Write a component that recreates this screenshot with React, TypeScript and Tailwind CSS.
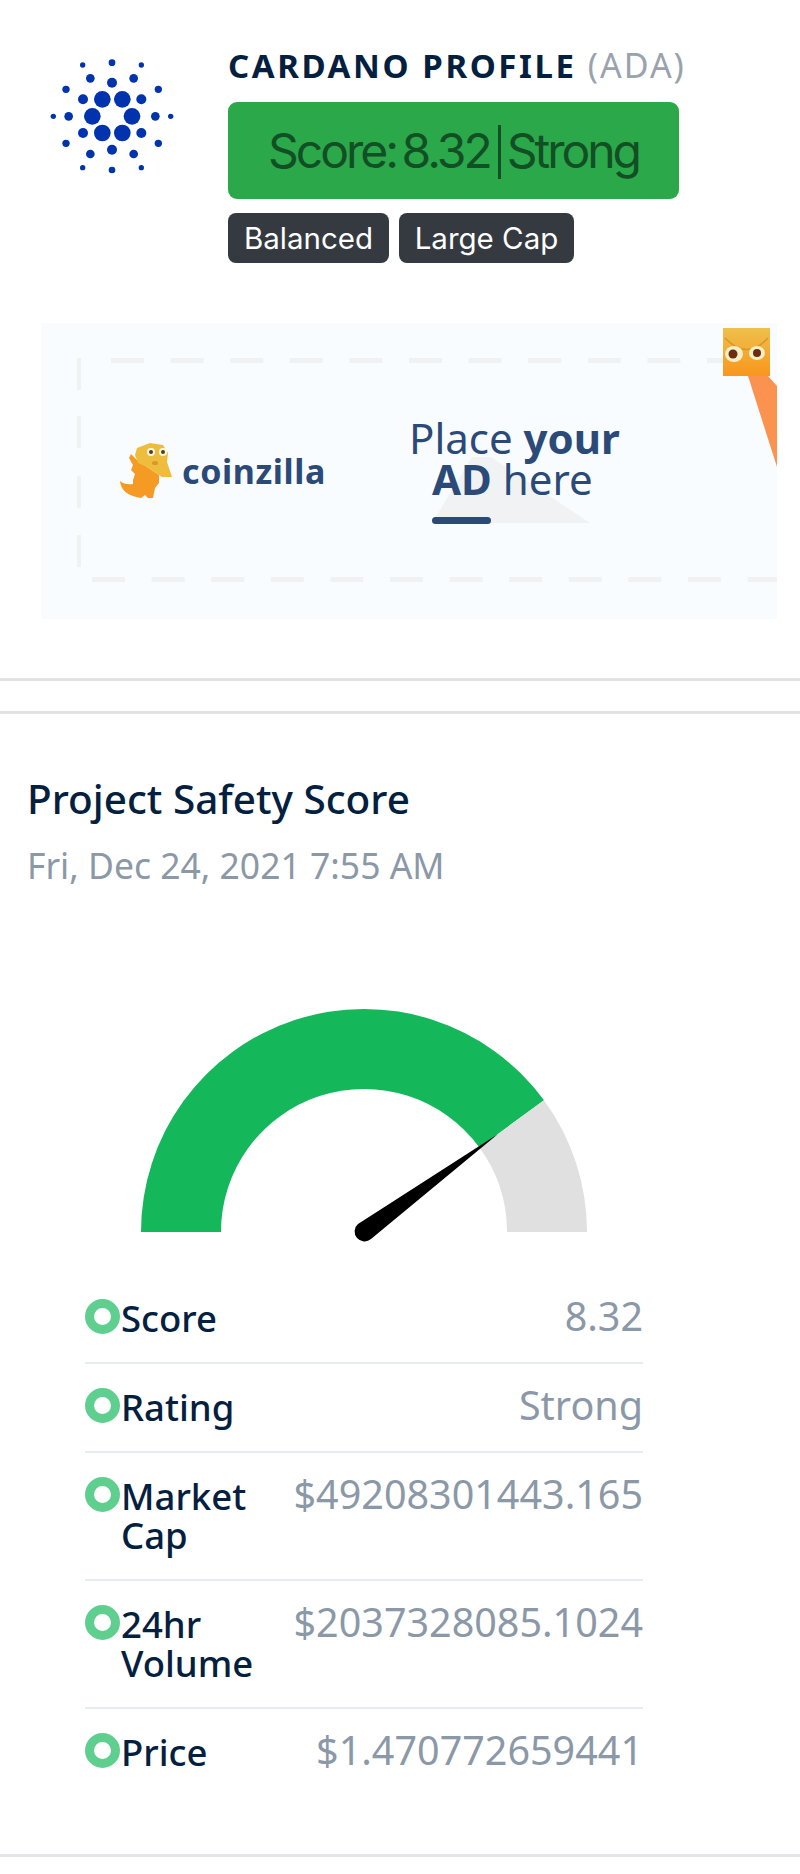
const dots: [number, number, number][] = [
  [217,178,25],[277,178,25],[187,229,25],[306,229,25],[217,279,25],[277,279,25],
  [159,178,15],[334,178,15],[116,229,13],[376,229,13],[159,279,15],[334,279,15],
  [246,128,15],[246,329,15],[181,115,13],[311,115,13],[181,342,13],[311,342,13],
  [108,148,11],[385,148,11],[108,310,11],[385,310,11],[70,229,8],[422,229,8],
  [158,75,8],[334,75,8],[158,383,8],[334,383,8],[246,68,10],[246,390,10],
];

function CardanoLogo() {
  return (
    <svg viewBox="0 0 480 480" className="w-[160px] h-[160px] shrink-0">
      {dots.map(([x, y, r], i) => (
        <circle key={i} cx={x} cy={y} r={r} fill="#0033ad" />
      ))}
    </svg>
  );
}

function Ad() {
  const topDashes = Array.from({ length: 11 }, (_, i) => 70 + i * 59.6);
  const bottomDashes = Array.from({ length: 12 }, (_, i) => 51 + i * 59.6);
  const ubuntu = "'Noto Sans', sans-serif";
  return (
    <svg viewBox="0 0 736 296" className="block w-[736px] h-[296px]">
      <rect width="736" height="296" fill="#f9fcff" />
      {topDashes.map((x) => <rect key={x} x={x} y="35" width="33" height="5" fill="#eff1f3" />)}
      {bottomDashes.map((x) => <rect key={x} x={x} y="254" width="33" height="5" fill="#eff1f3" />)}
      {[35, 93, 153, 212].map((y) => <rect key={y} x="36" y={y} width="4" height="32" fill="#eff1f3" />)}
      <polygon points="391,200 431,134 450,134 549,200" fill="#f0f2f4" />
      <rect x="391" y="194" width="59" height="7" rx="3.5" fill="#2b4a78" />
      {/* dinosaur */}
      <path d="M97 138 L90 131 L88 135 L92 142 L90 147 L94 151 L92 157 L92 161 Q84 162 79 158 Q80 172 100 175 L104 172 L107 175 L112 175 L114 165 L118 160 L118 152 L106 144 Z" fill="#f59a23" />
      <path d="M96 125 L109 120 L122 122 L127 130 L126 139 L131 154 L121 154 L106 144 L97 140 L94 132 Z" fill="#eebd3d" />
      <circle cx="110" cy="129" r="4" fill="#fff8e0" />
      <circle cx="122" cy="129" r="4" fill="#fff8e0" />
      <circle cx="110" cy="129" r="2" fill="#5b3a1c" />
      <circle cx="122" cy="129" r="2" fill="#5b3a1c" />
      <ellipse cx="114" cy="140" rx="3" ry="2" fill="#d9962a" />
      <text x="141" y="161" fontFamily={ubuntu} fontWeight="700" fontSize="34" fill="#2b4a78" letterSpacing="0.6">coinzilla</text>
      <text x="368" y="131" fontFamily={ubuntu} fontSize="42" fill="#2b4a78">Place <tspan fontWeight="700">your</tspan></text>
      <text x="391" y="172" fontFamily={ubuntu} fontSize="42" fill="#2b4a78"><tspan fontWeight="700">AD</tspan> here</text>
      {/* mascot */}
      <polygon points="707,53 727,53 736,63 736,144" fill="#fb9250" />
      <defs>
        <linearGradient id="mascot" x1="0" y1="0" x2="0" y2="1">
          <stop offset="0" stopColor="#eec04c" />
          <stop offset="1" stopColor="#f9961c" />
        </linearGradient>
      </defs>
      <rect x="682" y="5" width="47" height="48" fill="url(#mascot)" />
      <path d="M684 15 Q706 38 727 15" fill="none" stroke="#d9962a" strokeWidth="1.5" />
      <ellipse cx="693" cy="31" rx="9" ry="8" fill="#f4eec4" />
      <ellipse cx="716" cy="30" rx="8" ry="7" fill="#f4eec4" />
      <circle cx="692" cy="31" r="4.5" fill="#6b2c12" />
      <circle cx="716" cy="30" r="4" fill="#6b2c12" />
    </svg>
  );
}

function Gauge() {
  return (
    <svg viewBox="0 0 800 256" className="block w-[800px] h-[256px]">
      <path d="M141 233 A223 223 0 0 1 544 101.3 L479.4 148.5 A143 143 0 0 0 221 233 Z" fill="#14b85a" />
      <path d="M544 101.3 A223 223 0 0 1 587 233 L507 233 A143 143 0 0 0 479.4 148.5 Z" fill="#e0e0e0" />
      <path d="M498 135 L358 225 A9.5 9.5 0 0 0 371 240 Z" fill="#000" />
    </svg>
  );
}

const rows = [
  ["Score", "8.32"],
  ["Rating", "Strong"],
  ["Market Cap", "$49208301443.165"],
  ["24hr Volume", "$2037328085.1024"],
  ["Price", "$1.470772659441"],
];

export default function App() {
  return (
    <div className="w-[800px] h-[1874px] bg-white overflow-hidden [font-family:'Noto_Sans',sans-serif]">
      <header className="flex pl-[30px] pt-[40px] h-[323px]">
        <CardanoLogo />
        <div className="ml-[38px] w-[451px]">
          <h1 className="text-[33px] leading-[44px] mt-[3px] whitespace-nowrap font-bold tracking-[2.6px] text-[#04203f]">
            CARDANO PROFILE <span className="font-normal text-[34px] tracking-[2px] text-[#99a2ad]">(ADA)</span>
          </h1>
          <div className="mt-[14px] h-[97px] rounded-[9px] bg-[#2ba84a] flex items-center justify-center text-[48px] tracking-[-3px] [word-spacing:-5px] text-[#124f24] [font-family:Inter,sans-serif]">
            Score: 8.32
            <span className="w-[3px] h-[54px] bg-[#124f24] ml-[8px] mr-[6px] mt-[2px]"></span>
            Strong
          </div>
          <div className="mt-[14px] flex gap-[10px] text-white text-[29.5px] [font-family:Inter,sans-serif]">
            <span className="h-[50px] w-[161px] rounded-[8px] bg-[#343a40] flex items-center justify-center">Balanced</span>
            <span className="h-[50px] w-[175px] rounded-[8px] bg-[#343a40] flex items-center justify-center">Large Cap</span>
          </div>
        </div>
      </header>

      <div className="ml-[41px]">
        <Ad />
      </div>

      <div className="mt-[59px] border-t-[3px] border-[#e2e2e2]"></div>
      <div className="mt-[30px] border-t-[3px] border-[#e2e2e2]"></div>

      <section className="pl-[27px] pt-[58px]">
        <h2 className="text-[40.5px] leading-[54px] font-medium text-[#04203f]">Project Safety Score</h2>
        <p className="mt-[15px] text-[35.5px] leading-[48px] text-[#8b98a7]">Fri, Dec 24, 2021 7:55 AM</p>
      </section>

      <div className="mt-[110px]">
        <Gauge />
      </div>

      <div className="ml-[85px] w-[558px] mt-[20px]">
        {rows.map(([label, value]) => (
          <div key={label} className="flex justify-between pt-[24px] pb-[24px] border-b-2 border-[#e9ecef] last:border-b-0">
            <div className="flex w-[165px] shrink-0">
              <span className="w-[35px] h-[35px] mr-[1px] shrink-0 rounded-full border-[9px] border-[#5fcf8f]"></span>
              <span className="text-[36.5px] leading-[39px] font-medium text-[#04203f]">{label}</span>
            </div>
            <span className="text-[39.5px] leading-[39px] text-[#8b98a7] -mt-[2px]">{value}</span>
          </div>
        ))}
      </div>

      <div className="mt-[58px] border-t-[3px] border-[#e5e5ea]"></div>
    </div>
  );
}
